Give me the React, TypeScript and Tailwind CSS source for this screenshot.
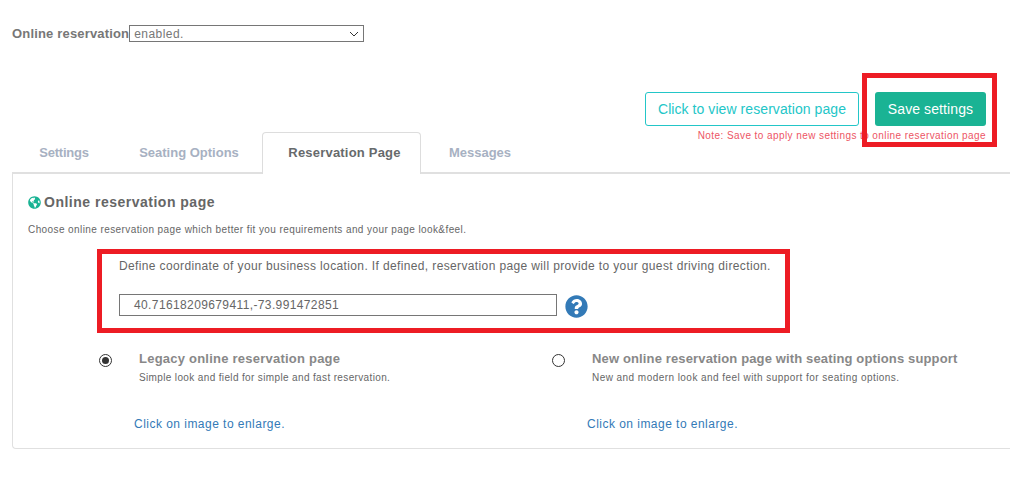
import React from "react";
import { FaGlobeAmericas, FaQuestionCircle } from "react-icons/fa";

const Option = ({ checked, title, desc, wrap, titleTrack, descTrack }: { checked: boolean; title: string; desc: string; wrap: string; titleTrack: string; descTrack: string }) => (
  <div className={`flex ${wrap}`}>
    <div className="w-[41px] pt-[7px] pl-[1px]">
      <span className="flex h-[13px] w-[13px] items-center justify-center rounded-full border border-[#333] bg-white">
        {checked && <span className="block h-[7px] w-[7px] rounded-full bg-[#333]" />}
      </span>
    </div>
    <div>
      <div className={`mt-[3px] text-[13px] font-bold leading-[18px] text-[#888] ${titleTrack}`}>{title}</div>
      <div className={`mt-[3px] text-[10px] leading-[14px] text-[#666] ${descTrack}`}>{desc}</div>
      <div className="-ml-[5px] mt-[31px] text-[12px] leading-[16px] tracking-[0.47px] text-[#337ab7]">Click on image to enlarge.</div>
    </div>
  </div>
);

export default function App() {
  return (
    <div className="relative h-[484px] w-[1010px] overflow-hidden bg-white font-['Liberation_Sans',Arial,sans-serif] text-[#666]">
      <div className="flex items-center pl-3 pt-[25px]">
        <span className="text-[13px] font-bold leading-[17px] tracking-[0.17px] text-[#777]">Online reservation</span>
        <div className="flex h-[17px] w-[235px] items-center justify-between border border-[#767676] pl-1 pr-[4px] text-[12px] tracking-[0.45px] text-[#777]">
          <span>enabled.</span>
          <svg width="10" height="6" viewBox="0 0 10 6" fill="none" stroke="#333" strokeWidth="1"><path d="M1 1l4 4 4-4" /></svg>
        </div>
      </div>

      <div className="mt-[50px] flex justify-end gap-4 pr-6">
        <div className="flex h-[34px] w-[214px] items-center justify-center rounded-[3px] border border-[#23c6c8] text-[14px] tracking-[0.07px] text-[#23c6c8]">Click to view reservation page</div>
        <div className="flex h-[34px] w-[111px] items-center justify-center rounded-[3px] bg-[#1ab394] text-[14px] tracking-[0.1px] text-white">Save settings</div>
      </div>
      <div className="mt-1 pr-6 text-right text-[10px] leading-[12px] tracking-[0.42px] text-[#ed5565]">Note: Save to apply new settings to online reservation page</div>

      <div className="-mt-[10px] ml-3 flex h-[42px] items-stretch border-b-2 border-[#e0e0e0] text-[13px] font-bold text-[#a7b1c2]">
        <div className="flex w-[104px] items-center justify-center pt-[2px] tracking-[-0.2px]">Settings</div>
        <div className="flex w-[146px] items-center justify-center pt-[2px]">Seating Options</div>
        <div className="-mb-[2px] flex w-[159px] items-center justify-center rounded-t-[4px] border border-b-0 border-[#ddd] bg-white pb-[2px] pl-[6px] tracking-[0.2px] text-[#676a6c]">Reservation Page</div>
        <div className="flex w-[118px] items-center justify-center pt-[2px]">Messages</div>
      </div>

      <div className="ml-3 h-[275px] w-[1010px] rounded-bl-[4px] border-b border-l border-[#e0e0e0] pl-[15px] pt-[20px]">
        <div className="flex items-center gap-[3px] text-[14px] font-bold leading-[17px] tracking-[0.5px] text-[#666]">
          <FaGlobeAmericas className="h-[13px] w-[13px] text-[#1ab394]" />
          <span>Online reservation page</span>
        </div>
        <div className="mt-[12px] text-[10px] leading-[14px] tracking-[0.41px] text-[#666]">Choose online reservation page which better fit you requirements and your page look&amp;feel.</div>

        <div className="ml-[69px] mt-[12px] h-[84px] w-[693px] border-[5px] border-[#ed1c24] pl-[17px] pt-[4px]">
          <div className="text-[12px] leading-[16px] tracking-[0.37px] text-[#666]">Define coordinate of your business location. If defined, reservation page will provide to your guest driving direction.</div>
          <div className="mt-[20px] flex items-start gap-[8px]">
            <div className="h-[22px] w-[438px] border border-[#767676] pl-[14px] text-[12px] leading-[20px] tracking-[0.38px] text-[#666]">40.71618209679411,-73.991472851</div>
            <FaQuestionCircle className="mt-[1px] h-[23px] w-[23px] text-[#337ab7]" />
          </div>
        </div>

        <div className="ml-[70px] mt-[14px] flex">
          <Option checked wrap="w-[453px]" titleTrack="tracking-[0.23px]" descTrack="tracking-[0.36px]" title="Legacy online reservation page" desc="Simple look and field for simple and fast reservation." />
          <Option checked={false} wrap="w-[450px]" titleTrack="tracking-[0.14px]" descTrack="tracking-[0.45px]" title="New online reservation page with seating options support" desc="New and modern look and feel with support for seating options." />
        </div>
      </div>

      <div className="absolute left-[862px] top-[73px] h-[74px] w-[135px] border-[5px] border-[#ed1c24]" />
    </div>
  );
}
